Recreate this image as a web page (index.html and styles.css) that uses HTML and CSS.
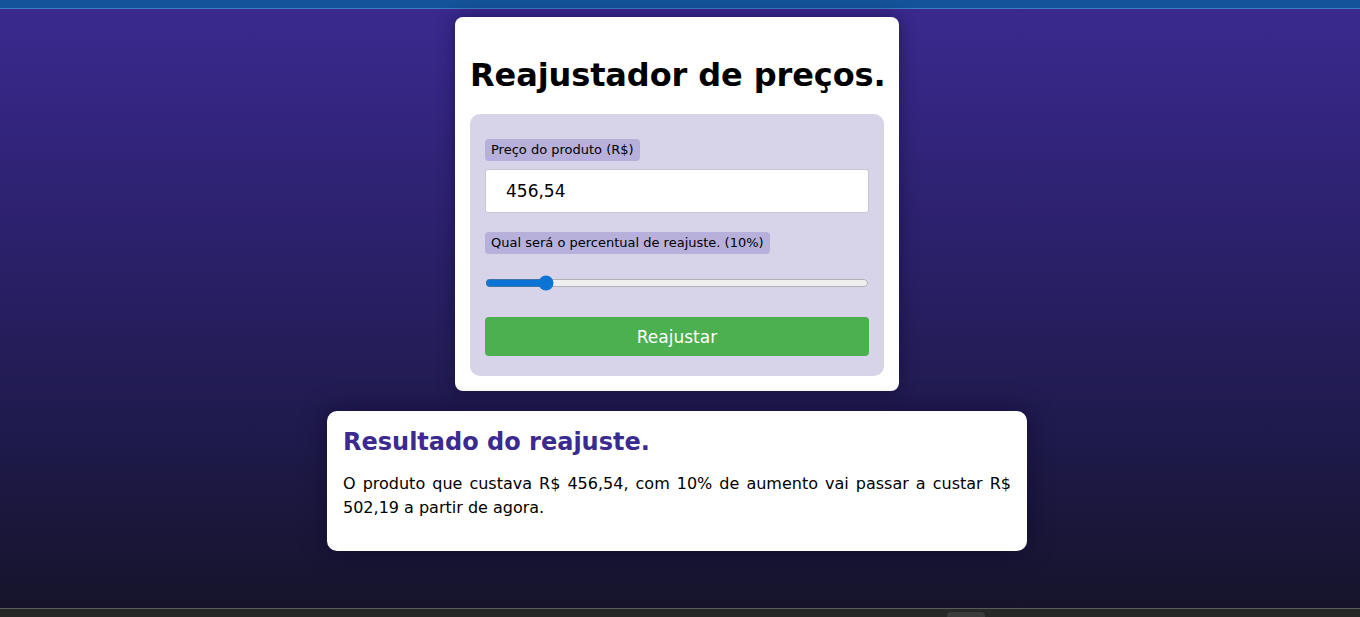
FILE: index.html
```html
<!DOCTYPE html>
<html lang="pt-BR">
<head>
<meta charset="utf-8">
<title>Reajustador de preços</title>
<link rel="stylesheet" href="styles.css">
</head>
<body>
<div class="topbar"></div>
<main class="page">
  <section class="card">
    <h1 class="title">Reajustador de preços.</h1>
    <form class="panel">
      <label class="tag" for="preco">Preço do produto (R$)</label>
      <input class="field" id="preco" type="text" value="456,54">
      <label class="tag tag-second" for="pct">Qual será o percentual de reajuste. (10%)</label>
      <input class="range" id="pct" type="range" min="0" max="70" value="10">
      <button class="btn" type="button">Reajustar</button>
    </form>
  </section>
  <section class="result">
    <h2 class="result-title">Resultado do reajuste.</h2>
    <p class="result-text">O produto que custava R$ 456,54, com 10% de aumento vai passar a custar R$ 502,19 a partir de agora.</p>
  </section>
</main>
<div class="bottombar"><div class="handle"></div></div>
</body>
</html>
```
FILE: styles.css
```css
* { box-sizing: border-box; }
html, body { height: 100%; }
body {
  margin: 0;
  font-family: "DejaVu Sans", Verdana, sans-serif;
  background: linear-gradient(to bottom, #3a2a90 0%, #2e2272 32%, #1e1a4a 72%, #161329 100%);
  display: flex;
  flex-direction: column;
  overflow: hidden;
}
.topbar {
  height: 9px;
  background: #14539a;
  border-bottom: 1px solid #3f7cc0;
  flex: none;
}
.page {
  flex: 1;
  display: flex;
  flex-direction: column;
  align-items: center;
  padding-top: 8px;
  padding-right: 6px;
  gap: 20px;
}
.card {
  width: 444px;
  background: #fff;
  border-radius: 8px;
  padding: 15px;
  box-shadow: 0 0 18px rgba(10, 5, 40, 0.45);
}
.title {
  margin: 24px 0 20px;
  font-size: 32px;
  font-weight: bold;
  color: #000;
  text-align: center;
  white-space: nowrap;
  letter-spacing: -0.1px;
}
.panel {
  background: #d7d3e9;
  border-radius: 10px;
  padding: 25px 15px 20px;
  display: flex;
  flex-direction: column;
  align-items: flex-start;
}
.tag {
  display: inline-block;
  background: #b7b0da;
  border-radius: 4px;
  font-size: 13px;
  color: #000;
  padding: 3px 6px;
  line-height: 16px;
}
.field {
  margin-top: 8px;
  width: 100%;
  height: 44px;
  border: 1px solid #c9c6d6;
  border-radius: 3px;
  background: #fff;
  padding: 0 20px;
  font-family: inherit;
  font-size: 17px;
  color: #000;
  outline: none;
}
.tag-second { margin-top: 19px; }
.range {
  margin: 21px 0 0;
  width: 100%;
  accent-color: #0b74d4;
  height: 16px;
}
.btn {
  margin-top: 26px;
  width: 100%;
  height: 39px;
  border: none;
  border-radius: 4px;
  background: #4caf50;
  color: #fff;
  font-family: inherit;
  font-size: 17px;
  cursor: pointer;
}
.result {
  width: 700px;
  background: #fff;
  border-radius: 10px;
  padding: 17px 16px 31px;
  box-shadow: 0 0 24px rgba(10, 5, 40, 0.55);
}
.result-title {
  margin: 0 0 16px;
  font-size: 24px;
  font-weight: bold;
  color: #3b2a8f;
}
.result-text {
  margin: 0;
  font-size: 16px;
  line-height: 24px;
  color: #000;
  text-align: justify;
}
.bottombar {
  flex: none;
  height: 9px;
  background: #262827;
  border-top: 1px solid #5a5a5a;
  display: flex;
  justify-content: flex-start;
  padding-left: 947px;
  padding-top: 3px;
}
.handle {
  width: 38px;
  height: 6px;
  background: #3a3c3c;
  border-radius: 4px 4px 0 0;
}
```
